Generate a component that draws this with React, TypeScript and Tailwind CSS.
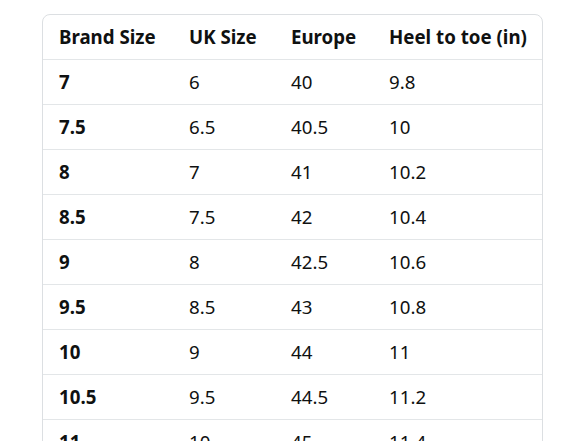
const rows = [
  ["7", "6", "40", "9.8"],
  ["7.5", "6.5", "40.5", "10"],
  ["8", "7", "41", "10.2"],
  ["8.5", "7.5", "42", "10.4"],
  ["9", "8", "42.5", "10.6"],
  ["9.5", "8.5", "43", "10.8"],
  ["10", "9", "44", "11"],
  ["10.5", "9.5", "44.5", "11.2"],
  ["11", "10", "45", "11.4"],
];

export default function App() {
  return (
    <div className="min-h-screen bg-white pl-[42px] pt-[14px] text-[#0f1111]" style={{ fontFamily: '"Noto Sans", "Open Sans", sans-serif' }}>
      <div className="w-[501px] rounded-lg border border-[#dcdfe2] overflow-hidden">
        <table className="w-full table-fixed border-collapse whitespace-nowrap text-[18.7px] leading-7">
          <thead>
            <tr>
              <th className="w-[130px] px-4 py-2 text-left font-bold">Brand Size</th>
              <th className="w-[102px] px-4 py-2 text-left font-bold">UK Size</th>
              <th className="w-[98px] px-4 py-2 text-left font-bold">Europe</th>
              <th className="px-4 py-2 text-left font-bold">Heel to toe (in)</th>
            </tr>
          </thead>
          <tbody>
            {rows.map((r) => (
              <tr key={r[0]} className="border-t border-[#e3e6e8]">
                <td className="px-4 py-2 font-bold">{r[0]}</td>
                <td className="px-4 py-2">{r[1]}</td>
                <td className="px-4 py-2">{r[2]}</td>
                <td className="px-4 py-2">{r[3]}</td>
              </tr>
            ))}
          </tbody>
        </table>
      </div>
    </div>
  );
}
